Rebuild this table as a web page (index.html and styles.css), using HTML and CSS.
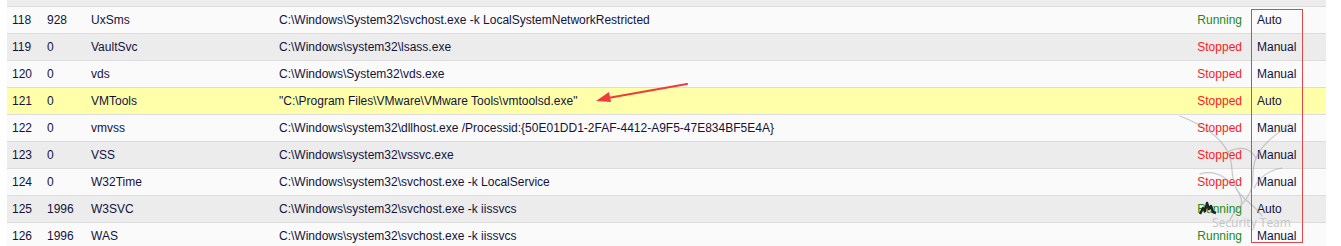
FILE: index.html
```html
<!DOCTYPE HTML>
<html>
<head>
  <link rel="stylesheet" href="styles.css">
</head>
<body>
  <div class="page">
    <table class="services">
      <colgroup>
        <col class="c-id"><col class="c-pid"><col class="c-name"><col class="c-path"><col class="c-state"><col class="c-start">
      </colgroup>
      <tr class="even cut"><td></td><td></td><td></td><td></td><td></td><td></td></tr>
      <tr class="odd"><td>118</td><td>928</td><td>UxSms</td><td>C:\Windows\System32\svchost.exe -k LocalSystemNetworkRestricted</td><td class="run">Running</td><td>Auto</td></tr>
      <tr class="even"><td>119</td><td>0</td><td>VaultSvc</td><td>C:\Windows\system32\lsass.exe</td><td class="stop">Stopped</td><td>Manual</td></tr>
      <tr class="odd"><td>120</td><td>0</td><td>vds</td><td>C:\Windows\System32\vds.exe</td><td class="stop">Stopped</td><td>Manual</td></tr>
      <tr class="mark"><td>121</td><td>0</td><td>VMTools</td><td>"C:\Program Files\VMware\VMware Tools\vmtoolsd.exe"</td><td class="stop">Stopped</td><td>Auto</td></tr>
      <tr class="odd"><td>122</td><td>0</td><td>vmvss</td><td>C:\Windows\system32\dllhost.exe /Processid:{50E01DD1-2FAF-4412-A9F5-47E834BF5E4A}</td><td class="stop">Stopped</td><td>Manual</td></tr>
      <tr class="even"><td>123</td><td>0</td><td>VSS</td><td>C:\Windows\system32\vssvc.exe</td><td class="stop">Stopped</td><td>Manual</td></tr>
      <tr class="odd"><td>124</td><td>0</td><td>W32Time</td><td>C:\Windows\system32\svchost.exe -k LocalService</td><td class="stop">Stopped</td><td>Manual</td></tr>
      <tr class="even"><td>125</td><td>1996</td><td>W3SVC</td><td>C:\Windows\system32\svchost.exe -k iissvcs</td><td class="run">Running</td><td>Auto</td></tr>
      <tr class="odd"><td>126</td><td>1996</td><td>WAS</td><td>C:\Windows\system32\svchost.exe -k iissvcs</td><td class="run">Running</td><td>Manual</td></tr>
    </table>

    <svg class="watermark" width="130" height="150" viewBox="0 0 130 150">
      <g class="wm-lines" fill="none" stroke="#9a9a9a" stroke-width="1.2" stroke-linecap="round">
        <path d="M10 12 C30 20 48 30 58 48 C64 60 60 72 66 84 C72 96 84 100 92 112"/>
        <path d="M120 20 C104 32 92 40 86 54 C80 68 86 80 78 92 C72 102 64 106 60 116"/>
        <path d="M58 48 C70 42 80 44 86 54"/>
        <path d="M30 70 C44 66 56 72 62 82"/>
        <path d="M112 64 C100 66 90 72 84 84"/>
        <path d="M66 84 C70 92 74 96 70 104"/>
      </g>
      <text x="42" y="123" class="wm-text">Security Team</text>
    </svg>
    <svg class="blob" width="18" height="16" viewBox="0 0 18 16">
      <path d="M1 14 L4 8 L6 11 L8 3 L10 9 L12 6 L14 12 L17 13" fill="none" stroke="#222" stroke-width="2.4" stroke-linejoin="round"/>
    </svg>

    <div class="box"></div>
    <svg class="arrow" width="100" height="24" viewBox="0 0 100 24">
      <path d="M93 2 L14 16" stroke="#ee3b3b" stroke-width="2.2" stroke-linecap="round"/>
      <path d="M2 19 L15 10 L17 20 Z" fill="#ee3b3b"/>
    </svg>
  </div>
</body>
</html>
```

FILE: styles.css
```css
body {
  margin: 0;
  background: #fff;
  font-family: "Liberation Sans", Arial, sans-serif;
}
.page {
  position: relative;
  width: 1341px;
  height: 246px;
  overflow: hidden;
}
.services {
  margin-left: 7px;
  width: 1319px;
  border-collapse: collapse;
  table-layout: fixed;
  font-size: 12px;
  color: #13133a;
}
.c-id { width: 35px; }
.c-pid { width: 44px; }
.c-name { width: 188px; }
.c-path { width: 900px; }
.c-state { width: 78px; }
.c-start { width: 74px; }
.services td {
  height: 26px;
  padding: 0 5px;
  border-bottom: 1px solid #dcdcdc;
  white-space: nowrap;
  overflow: hidden;
}
.services tr.cut td {
  height: 6px;
  padding: 0;
}
.services td:nth-child(5) {
  text-align: right;
  padding-right: 10px;
}
.odd { background: #fafafa; }
.even { background: #ececec; }
.mark { background: #ffffaa; }
.run { color: #1c8a1c; }
.stop { color: #ff1a1a; }

.box {
  position: absolute;
  left: 1251px;
  top: 9px;
  width: 50px;
  height: 232px;
  border: 1px solid #e24545;
}
.arrow {
  position: absolute;
  left: 594px;
  top: 82px;
}
.watermark {
  position: absolute;
  left: 1170px;
  top: 104px;
}
.wm-lines {
  opacity: 0.5;
}
.wm-text {
  font-family: "Open Sans", sans-serif;
  font-size: 12px;
  fill: #c6c6c6;
}
.blob {
  position: absolute;
  left: 1199px;
  top: 200px;
}
```
